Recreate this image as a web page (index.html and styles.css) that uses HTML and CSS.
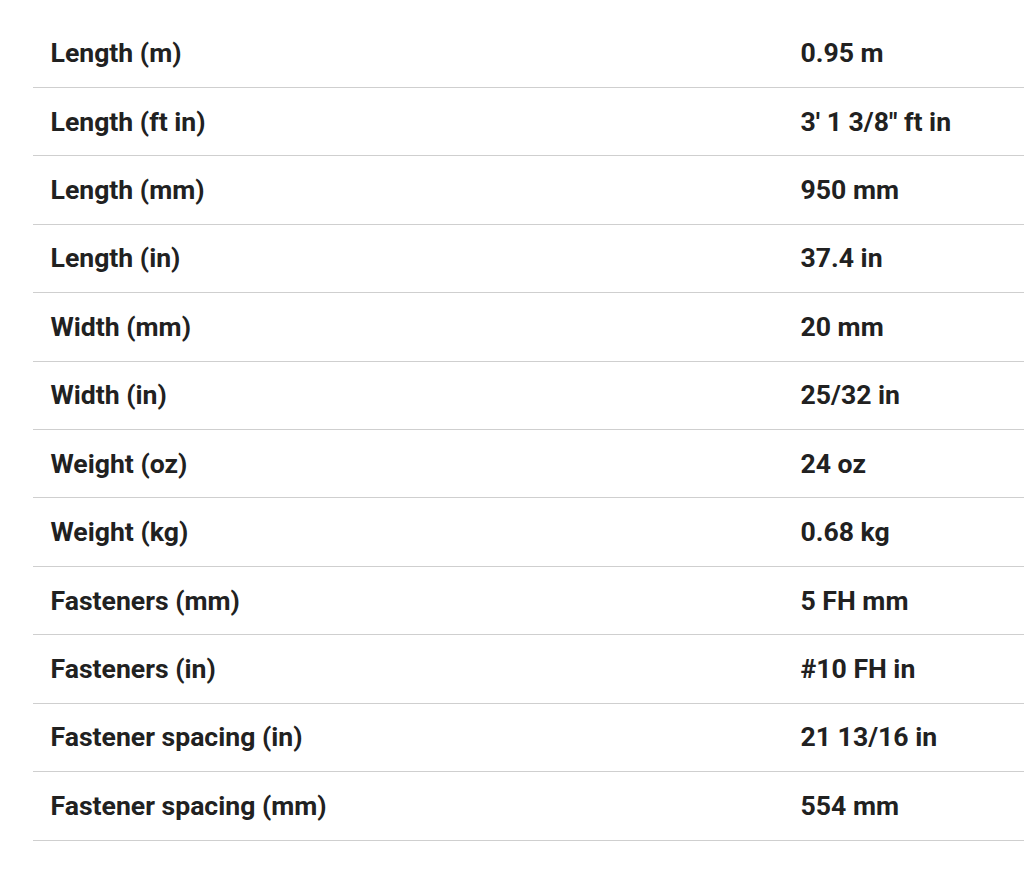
FILE: index.html
```html
<!DOCTYPE html>
<html lang="en">
<head>
<meta charset="utf-8">
<title>Specifications</title>
<link rel="stylesheet" href="styles.css">
</head>
<body>
<div class="specs">
  <table class="spec-table">
    <tbody>
      <tr><td class="label">Length (m)</td><td class="value">0.95 m</td></tr>
      <tr><td class="label">Length (ft in)</td><td class="value">3' 1 3/8" ft in</td></tr>
      <tr><td class="label">Length (mm)</td><td class="value">950 mm</td></tr>
      <tr><td class="label">Length (in)</td><td class="value">37.4 in</td></tr>
      <tr><td class="label">Width (mm)</td><td class="value">20 mm</td></tr>
      <tr><td class="label">Width (in)</td><td class="value">25/32 in</td></tr>
      <tr><td class="label">Weight (oz)</td><td class="value">24 oz</td></tr>
      <tr><td class="label">Weight (kg)</td><td class="value">0.68 kg</td></tr>
      <tr><td class="label">Fasteners (mm)</td><td class="value">5 FH mm</td></tr>
      <tr><td class="label">Fasteners (in)</td><td class="value">#10 FH in</td></tr>
      <tr><td class="label">Fastener spacing (in)</td><td class="value">21 13/16 in</td></tr>
      <tr><td class="label">Fastener spacing (mm)</td><td class="value">554 mm</td></tr>
    </tbody>
  </table>
</div>
</body>
</html>
```

FILE: styles.css
```css
html, body {
  margin: 0;
  padding: 0;
  background: #ffffff;
}

body {
  font-family: Roboto, "Liberation Sans", Arial, sans-serif;
  color: #212121;
}

.specs {
  padding: 19px 0 0 33px;
  overflow: hidden;
}

.spec-table {
  width: 100%;
  border-collapse: collapse;
  table-layout: fixed;
}

.spec-table tr {
  height: 68.43px;
  border-bottom: 1px solid #cfcfcf;
}

.spec-table td {
  padding: 0 17.5px;
  font-size: 26.6px;
  font-weight: 700;
  line-height: 30px;
  vertical-align: middle;
  white-space: nowrap;
}

.spec-table .label {
  width: 715px;
}
```
